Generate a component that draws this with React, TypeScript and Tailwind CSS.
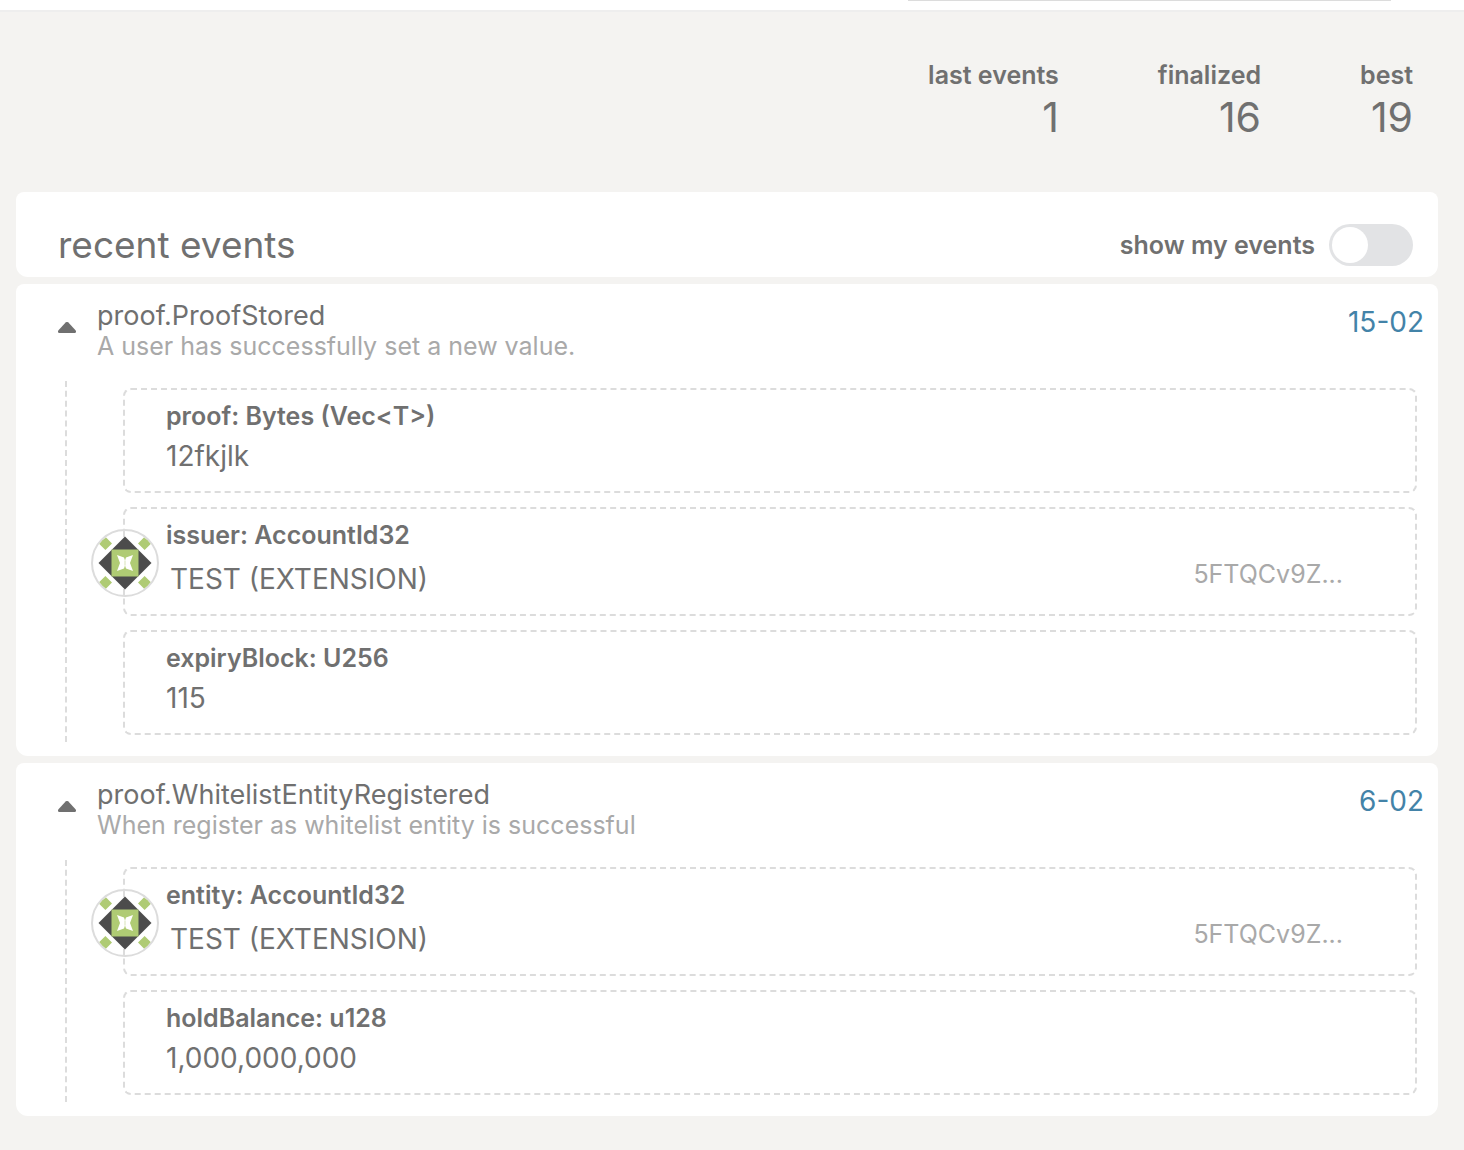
import { useState } from 'react';

type Param = { label: string; value: string; address?: string };
type ChainEvent = { name: string; info: string; block: string; params: Param[] };

const stats = [
  { label: 'last events', value: '1' },
  { label: 'finalized', value: '16' },
  { label: 'best', value: '19' },
];

const events: ChainEvent[] = [
  {
    name: 'proof.ProofStored',
    info: 'A user has successfully set a new value.',
    block: '15-02',
    params: [
      { label: 'proof: Bytes (Vec<T>)', value: '12fkjlk' },
      { label: 'issuer: AccountId32', value: 'TEST (EXTENSION)', address: '5FTQCv9Z...' },
      { label: 'expiryBlock: U256', value: '115' },
    ],
  },
  {
    name: 'proof.WhitelistEntityRegistered',
    info: 'When register as whitelist entity is successful',
    block: '6-02',
    params: [
      { label: 'entity: AccountId32', value: 'TEST (EXTENSION)', address: '5FTQCv9Z...' },
      { label: 'holdBalance: u128', value: '1,000,000,000' },
    ],
  },
];

function Identicon() {
  return (
    <svg viewBox="0 0 68 68" className="absolute top-5 -left-[34px] size-[68px]" aria-hidden="true">
      <defs>
        <clipPath id="disc">
          <circle cx="34" cy="34" r="32" />
        </clipPath>
      </defs>
      <circle cx="34" cy="34" r="33" fill="#fff" stroke="#dcdcdc" strokeWidth="2" />
      <path d="M33 2v6M33 60v6" stroke="#dcdcdc" strokeWidth="2" />
      <g clipPath="url(#disc)" fill="#afcb74">
        <path d="M14.400 7.800l6.600 6.600-6.600 6.600-6.600-6.600zM53.600 7.800l6.600 6.600-6.600 6.600-6.600-6.600zM14.400 47l6.600 6.600-6.600 6.600-6.600-6.600zM53.600 47l6.600 6.600-6.600 6.600-6.600-6.600z" />
      </g>
      <path d="M34 7.500L60.500 34 34 60.500 7.500 34z" fill="#4c4c4c" />
      <path d="M20.500 20.500h27v27h-27z" fill="#afcb74" />
      <path
        d="M26 26l7 2.500 1 3 1-3 7-2.500-3 8 3 8-7-2.500-1-3-1 3-7 2.500 3-8z"
        fill="#fff"
      />
      <path d="M34 31.500v5" stroke="#e4edcf" strokeWidth="1.500" />
    </svg>
  );
}

function ParamBox({ param }: { param: Param }) {
  return (
    <div className="relative rounded-lg border-2 border-dashed border-[#dcdcdc] pt-2.5 pb-2 pl-[41px]">
      {param.address && <Identicon />}
      <div className="text-[25px] leading-8 font-semibold">{param.label}</div>
      {param.address ? (
        <div className="flex items-start justify-between pt-2 pr-[72px] pl-1">
          <span className="pb-[7px] text-[28px] leading-10">{param.value}</span>
          <span className="text-[25px] leading-[30px] text-[#a9a9a9]">{param.address}</span>
        </div>
      ) : (
        <div className="pt-1 pb-[7px] text-[28px] leading-10">{param.value}</div>
      )}
    </div>
  );
}

function EventCard({ event }: { event: ChainEvent }) {
  const [open, setOpen] = useState(true);
  return (
    <article className="rounded-t-lg rounded-b-xl bg-white pb-3.5">
      <header className="flex h-[97px] items-start pr-3.5 pl-[42px]">
        <button
          type="button"
          aria-expanded={open}
          aria-label={`Toggle ${event.name}`}
          onClick={() => setOpen(!open)}
          className="mt-[38px] cursor-pointer"
        >
          <svg viewBox="0 0 18 11" className={open ? 'h-[11px] w-[18px]' : 'h-[11px] w-[18px] rotate-180'}>
            <path d="M7.600.600a2 2 0 0 1 2.800 0L17.500 8.200c1 1.100.500 2.800-1 2.800h-15c-1.500 0-2-1.700-1-2.800z" fill="#707070" />
          </svg>
        </button>
        <div className="grow pt-4 pl-[21px]">
          <h2 className="text-[27px] leading-8">{event.name}</h2>
          <p className="text-[25px] leading-7 text-[#a9a9a9]">{event.info}</p>
        </div>
        <a href={`#${event.block}`} className="pt-[22px] text-[28px] leading-8 text-[#4383a8]">
          {event.block}
        </a>
      </header>
      {open && (
        <div className="mr-[21px] ml-[49px] flex flex-col gap-3.5 border-l-2 border-dashed border-[#dcdcdc] py-[7px] pl-14">
          {event.params.map((param) => (
            <ParamBox key={param.label} param={param} />
          ))}
        </div>
      )}
    </article>
  );
}

export default function App() {
  const [mine, setMine] = useState(false);
  return (
    <div className="min-h-screen bg-[#f4f3f1] font-[Inter,'Liberation_Sans',sans-serif] text-[#707070]">
      <div className="h-3 border-b-2 border-[#eeeeee] bg-white">
        <div className="mr-[73px] ml-auto h-px w-[33%] bg-[#dcdcdc]" />
      </div>
      <dl className="flex justify-end gap-[99px] pt-[47px] pr-[51px] pb-[51px] text-right">
        {stats.map((s) => (
          <div key={s.label}>
            <dt className="text-[25px] leading-8 font-semibold">{s.label}</dt>
            <dd className="pt-0.5 text-[41px] leading-[48px]">{s.value}</dd>
          </div>
        ))}
      </dl>
      <main className="flex flex-col gap-[7px] pr-[26px] pb-[34px] pl-4">
        <div className="flex items-center justify-between rounded-t-lg rounded-b-xl bg-white pt-[29px] pr-[25px] pb-2 pl-[42px]">
          <h1 className="text-[37px] leading-[48px]">recent events</h1>
          <label className="flex cursor-pointer items-center gap-3.5 text-[25px] leading-8 font-semibold">
            show my events
            <input
              type="checkbox"
              role="switch"
              checked={mine}
              onChange={(e) => setMine(e.target.checked)}
              className="h-[42px] w-[84px] cursor-pointer appearance-none rounded-full bg-[#e2e3e5] p-[3px] before:block before:size-9 before:rounded-full before:bg-white checked:bg-[#4383a8] checked:before:ml-auto"
            />
          </label>
        </div>
        {events.map((event) => (
          <EventCard key={event.name} event={event} />
        ))}
      </main>
    </div>
  );
}
